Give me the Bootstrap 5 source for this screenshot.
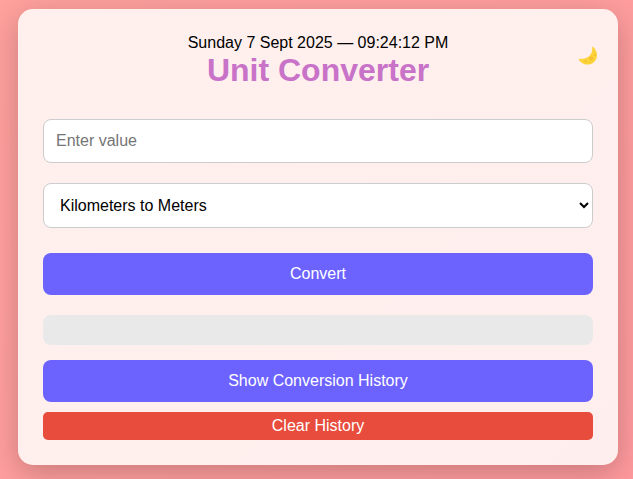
<!DOCTYPE html>
<html lang="en">
<head>
<meta charset="utf-8">
<meta name="viewport" content="width=device-width, initial-scale=1">
<title>Unit Converter</title>
<link href="https://cdn.jsdelivr.net/npm/bootstrap@5.3.0/dist/css/bootstrap.min.css" rel="stylesheet">
<style>
body { font-family: "Liberation Sans", Arial, sans-serif; color: #000; height: 479px; overflow: hidden; background: linear-gradient(135deg, #ffa19d, #ff9a9e); }
.converter { width: 600px; height: 456px; margin: 9px 0 0 18px; padding: 25px; border-radius: 15px; background: linear-gradient(135deg, #fff0ee, #feefee); box-shadow: 0 8px 30px rgba(0,0,0,.22); }
.clock { line-height: 18px; }
.title { font-size: 32px; font-weight: 700; line-height: 36px; color: #c872c8; margin-bottom: 31px; }
.theme-toggle { top: 37px; right: 19px; width: 21px; height: 21px; }
.value-input { height: 44px; padding: 0 12px; border: 1px solid #ccc; border-radius: 8px; color: #000; margin-bottom: 20px; outline: 0; }
.value-input::placeholder { color: #757575; }
.unit-select { height: 45px; padding: 0 0 0 12px; border: 1px solid #ccc; border-radius: 8px; background: #fff; color: #000; margin-bottom: 25px; }
.action { --bs-btn-bg: #6c63ff; --bs-btn-color: #fff; --bs-btn-hover-bg: #574fdb; --bs-btn-hover-color: #fff; height: 42px; border: 0; border-radius: 8px; padding: 0; line-height: 18px; }
.result { height: 30px; border-radius: 8px; background: #e9e9e9; margin: 20px 0 15px; }
.clear { --bs-btn-bg: #e74c3c; --bs-btn-hover-bg: #c0392b; height: 28px; border-radius: 5px; margin-top: 10px; }
</style>
</head>
<body>
<main class="converter position-relative d-flex flex-column">
  <div class="clock text-center">Sunday 7 Sept 2025 — 09:24:12 PM</div>
  <h1 class="title text-center">Unit Converter</h1>
  <button class="theme-toggle btn p-0 border-0 position-absolute d-flex" aria-label="Toggle dark mode">
    <svg width="21" height="21" viewBox="0 0 22 22" aria-hidden="true">
      <path d="M15.8 .9C21.6 6.2 21.2 14.2 15.6 17.9C10.3 21 3.7 19.5 .8 14.4C.6 13.7 1.1 13.2 1.8 13.4C7.2 14 11.6 12.2 13.5 8.5C14.8 6.1 15.1 4 14.8 1.7C14.7 .9 15.4 .6 15.8 .9Z" fill="#fdd33b"/>
      <g fill="#f6bf2f"><circle cx="13.8" cy="13" r="2.1"/><circle cx="8.1" cy="16" r="1.2"/><circle cx="17.6" cy="9.5" r="1"/><circle cx="12" cy="17.4" r=".7"/></g>
    </svg>
  </button>
  <input class="value-input w-100" type="text" placeholder="Enter value" aria-label="Value">
  <select class="unit-select w-100" aria-label="Conversion">
    <option>Kilometers to Meters</option>
  </select>
  <button class="action btn w-100">Convert</button>
  <div class="result"></div>
  <button class="action btn w-100">Show Conversion History</button>
  <button class="action clear btn w-100">Clear History</button>
</main>
<script src="https://cdn.jsdelivr.net/npm/bootstrap@5.3.0/dist/js/bootstrap.bundle.min.js"></script>
</body>
</html>
